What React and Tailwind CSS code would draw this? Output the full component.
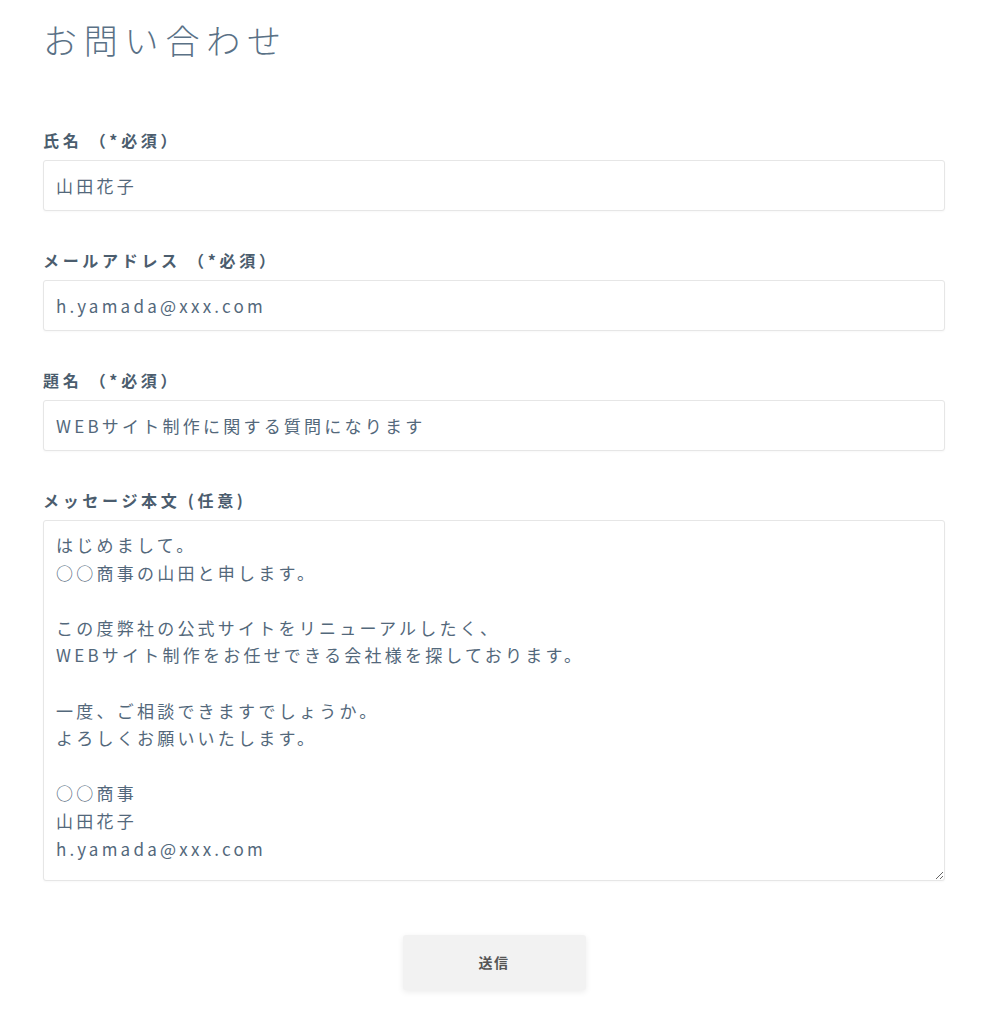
import React from "react";

const font = { fontFamily: '"Noto Sans CJK JP", "Noto Sans", sans-serif' };

const msg = `はじめまして。
○○商事の山田と申します。

この度弊社の公式サイトをリニューアルしたく、
WEBサイト制作をお任せできる会社様を探しております。

一度、ご相談できますでしょうか。
よろしくお願いいたします。

○○商事
山田花子
h.yamada@xxx.com`;

function Label({ children }) {
  return (
    <label className="block text-[16px] font-bold text-[#4b5d6e] tracking-[0.23em] leading-[24px] mb-[8px]">
      {children}
    </label>
  );
}

function Field({ label, value }) {
  return (
    <div className="mb-[37px]">
      <Label>{label}</Label>
      <input
        readOnly
        value={value}
        className="block w-full h-[51px] px-[12px] border border-[#e6e6e6] rounded-[3px] text-[17px] text-[#53687b] tracking-[0.19em] outline-none bg-white shadow-[0_1px_2px_rgba(0,0,0,0.03)]"
        style={font}
      />
    </div>
  );
}

export default function App() {
  return (
    <div className="bg-white min-h-[1024px] px-[43px] pt-[16px]" style={font}>
      <div className="w-[902px]">
        <h1 className="text-[34px] font-light text-[#5a7186] tracking-[0.2em] leading-[48px] mb-[64px]">
          お問い合わせ
        </h1>
        <Field label="氏名 （*必須）" value="山田花子" />
        <Field label="メールアドレス （*必須）" value="h.yamada@xxx.com" />
        <Field label="題名 （*必須）" value="WEBサイト制作に関する質問になります" />
        <div>
          <Label>メッセージ本文 (任意)</Label>
          <textarea
            readOnly
            value={msg}
            className="block w-full h-[361px] px-[12px] pt-[10px] border border-[#e6e6e6] rounded-[3px] text-[17px] text-[#53687b] tracking-[0.19em] leading-[27.6px] outline-none bg-white shadow-[0_1px_2px_rgba(0,0,0,0.03)]"
            style={font}
          />
        </div>
        <div className="flex justify-center mt-[54px]">
          <button className="w-[183px] h-[55px] bg-[#f2f2f2] rounded-[3px] shadow-[0_2px_6px_rgba(0,0,0,0.08)] text-[14px] font-bold text-[#555] tracking-[0.1em]">
            送信
          </button>
        </div>
      </div>
    </div>
  );
}
